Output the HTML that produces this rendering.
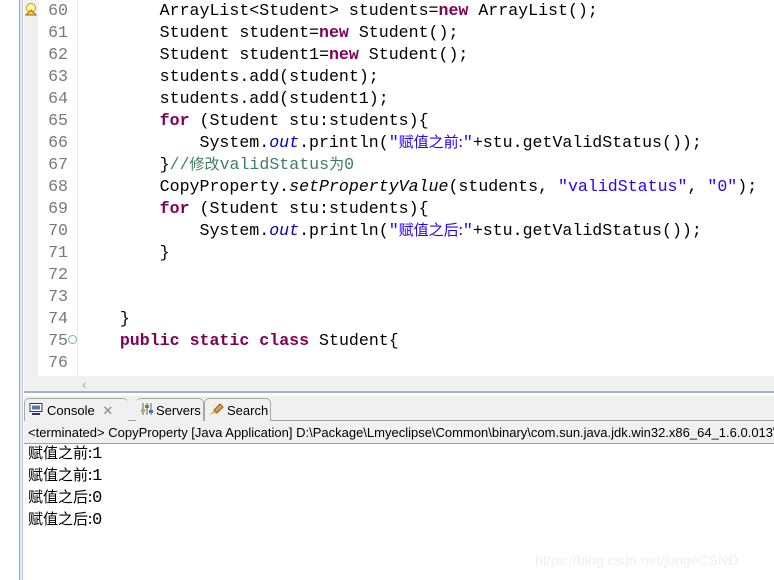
<!DOCTYPE html>
<html><head><meta charset="utf-8"><style>
*{margin:0;padding:0;box-sizing:border-box}
body{width:774px;height:580px;overflow:hidden;background:#fff;position:relative;font-family:"Liberation Sans","Noto Sans CJK SC",sans-serif}
.edge{position:absolute;left:19px;top:0;width:4px;height:580px;border-left:1px solid #a0a0a0;border-right:1px solid #b8c8dc;background:#e8ecf0}
.gut{position:absolute;left:24px;top:0;width:14px;height:376px;background:#f0f0f0}
.nums{position:absolute;left:38px;top:0;width:40px;height:376px;background:#fff;border-right:1px solid #e8e8e8}
.ln{position:absolute;left:38px;width:30px;text-align:right;font:16.6px/22px "Liberation Mono",monospace;color:#787878}
.code{position:absolute;left:80px;top:0}
.code div{height:22px;overflow:visible;font:16.6px/22px "Liberation Mono",monospace;color:#000;white-space:pre}
.k{color:#7f0055;font-weight:bold}.s{color:#2a00ff}.c{color:#3f7f5f}.f{color:#0000c0;font-style:italic}.i{font-style:italic}
.cj{font-family:"Noto Sans CJK SC",sans-serif;font-size:15px;line-height:0}
.hs{position:absolute;left:24px;top:376px;width:750px;height:16px;background:#f0f0f0;color:#aaa;font-size:14px;line-height:16px;padding-left:58px}
.blue{position:absolute;left:24px;top:391px;width:750px;height:2px;background:#9fb4cc}
.tabs{position:absolute;left:24px;top:396px;width:750px;height:25px;background:#f0f0f0;border-bottom:1px solid #a0a0a0;font-size:13px}
.tab{position:absolute;top:2px;height:23px;line-height:23px;border:1px solid #a8a8a8;border-bottom:none;border-radius:5px 5px 0 0;background:#f0f0f0}
.term{position:absolute;left:24px;top:421px;width:750px;height:23px;background:#f0f0f0;border-bottom:1px solid #a0a0a0;font-size:13px;line-height:23px;padding-left:4px;white-space:nowrap;color:#000}
.out{position:absolute;left:28px;height:22px;font:15px/22px "Noto Sans CJK SC",sans-serif;color:#000}
.out b{font-weight:normal;font-family:"Liberation Mono",monospace;font-size:17px;line-height:0}
.wm{position:absolute;left:535px;top:552px;color:#efefef;font-size:14px}
</style></head><body>
<div class="edge"></div><div class="gut"></div><div class="nums"></div>
<svg style="position:absolute;left:25px;top:2px" width="14" height="14"><circle cx="6" cy="6" r="4.5" fill="#fff6b0" stroke="#c8a000"/><path d="M6 8 L11 13 L1 13Z" fill="#f8d030" stroke="#a07000"/></svg>
<div class="ln" style="top:0">60</div><div class="ln" style="top:22px">61</div><div class="ln" style="top:44px">62</div><div class="ln" style="top:66px">63</div><div class="ln" style="top:88px">64</div><div class="ln" style="top:110px">65</div><div class="ln" style="top:132px">66</div><div class="ln" style="top:154px">67</div><div class="ln" style="top:176px">68</div><div class="ln" style="top:198px">69</div><div class="ln" style="top:220px">70</div><div class="ln" style="top:242px">71</div><div class="ln" style="top:264px">72</div><div class="ln" style="top:286px">73</div><div class="ln" style="top:308px">74</div><div class="ln" style="top:330px">75</div><div class="ln" style="top:352px">76</div>
<div style="position:absolute;left:68px;top:335px;width:9px;height:9px;border:1px solid #8aa;border-radius:50%"></div>
<div class="code">
<div>        ArrayList&lt;Student&gt; students=<span class="k">new</span> ArrayList();</div>
<div>        Student student=<span class="k">new</span> Student();</div>
<div>        Student student1=<span class="k">new</span> Student();</div>
<div>        students.add(student);</div>
<div>        students.add(student1);</div>
<div>        <span class="k">for</span> (Student stu:students){</div>
<div>            System.<span class="f">out</span>.println(<span class="s">"<span class="cj">赋值之前:</span>"</span>+stu.getValidStatus());</div>
<div>        }<span class="c">//<span class="cj">修改</span>validStatus<span class="cj">为</span>0</span></div>
<div>        CopyProperty.<span class="i">setPropertyValue</span>(students, <span class="s">"validStatus"</span>, <span class="s">"0"</span>);</div>
<div>        <span class="k">for</span> (Student stu:students){</div>
<div>            System.<span class="f">out</span>.println(<span class="s">"<span class="cj">赋值之后:</span>"</span>+stu.getValidStatus());</div>
<div>        }</div>
<div> </div>
<div> </div>
<div>    }</div>
<div>    <span class="k">public</span> <span class="k">static</span> <span class="k">class</span> Student{</div>
</div>
<div class="hs">‹</div><div class="blue"></div>
<div class="tabs">
<div class="tab" style="left:0;width:104px;border-right:none;padding-left:22px">Console <span style="color:#888;margin-left:4px">✕</span></div>
<svg style="position:absolute;left:5px;top:7px" width="14" height="12"><rect x="1" y="0.5" width="12" height="8" fill="#fff" stroke="#336"/><rect x="3" y="2.5" width="8" height="4" fill="#4a7ab0"/><rect x="3" y="10" width="8" height="2" fill="#336"/></svg>
<div class="tab" style="left:112px;width:68px;padding-left:20px;border-left:none">Servers</div>
<svg style="position:absolute;left:116px;top:6px" width="14" height="14"><path d="M3 1v12M7 1v12M11 1v12" stroke="#666"/><rect x="1" y="7" width="4" height="3" fill="#e8a020"/><rect x="5" y="3" width="4" height="3" fill="#40a040"/><rect x="9" y="8" width="4" height="3" fill="#4070c0"/></svg>
<div class="tab" style="left:180px;width:67px;padding-left:22px">Search</div>
<svg style="position:absolute;left:184px;top:6px" width="16" height="14"><path d="M1 13L6 8L9 11Z" fill="#e8c070"/><path d="M6 8L12 2L15 5L9 11Z" fill="#d8a040" stroke="#906020"/></svg>
</div>
<div class="term">&lt;terminated&gt; CopyProperty [Java Application] D:\Package\Lmyeclipse\Common\binary\com.sun.java.jdk.win32.x86_64_1.6.0.013\</div>
<div class="out" style="top:442px">赋值之前:<b>1</b></div>
<div class="out" style="top:464px">赋值之前:<b>1</b></div>
<div class="out" style="top:486px">赋值之后:<b>0</b></div>
<div class="out" style="top:508px">赋值之后:<b>0</b></div>
<div class="wm">https://blog.csdn.net/jungeCSND</div>
</body></html>
